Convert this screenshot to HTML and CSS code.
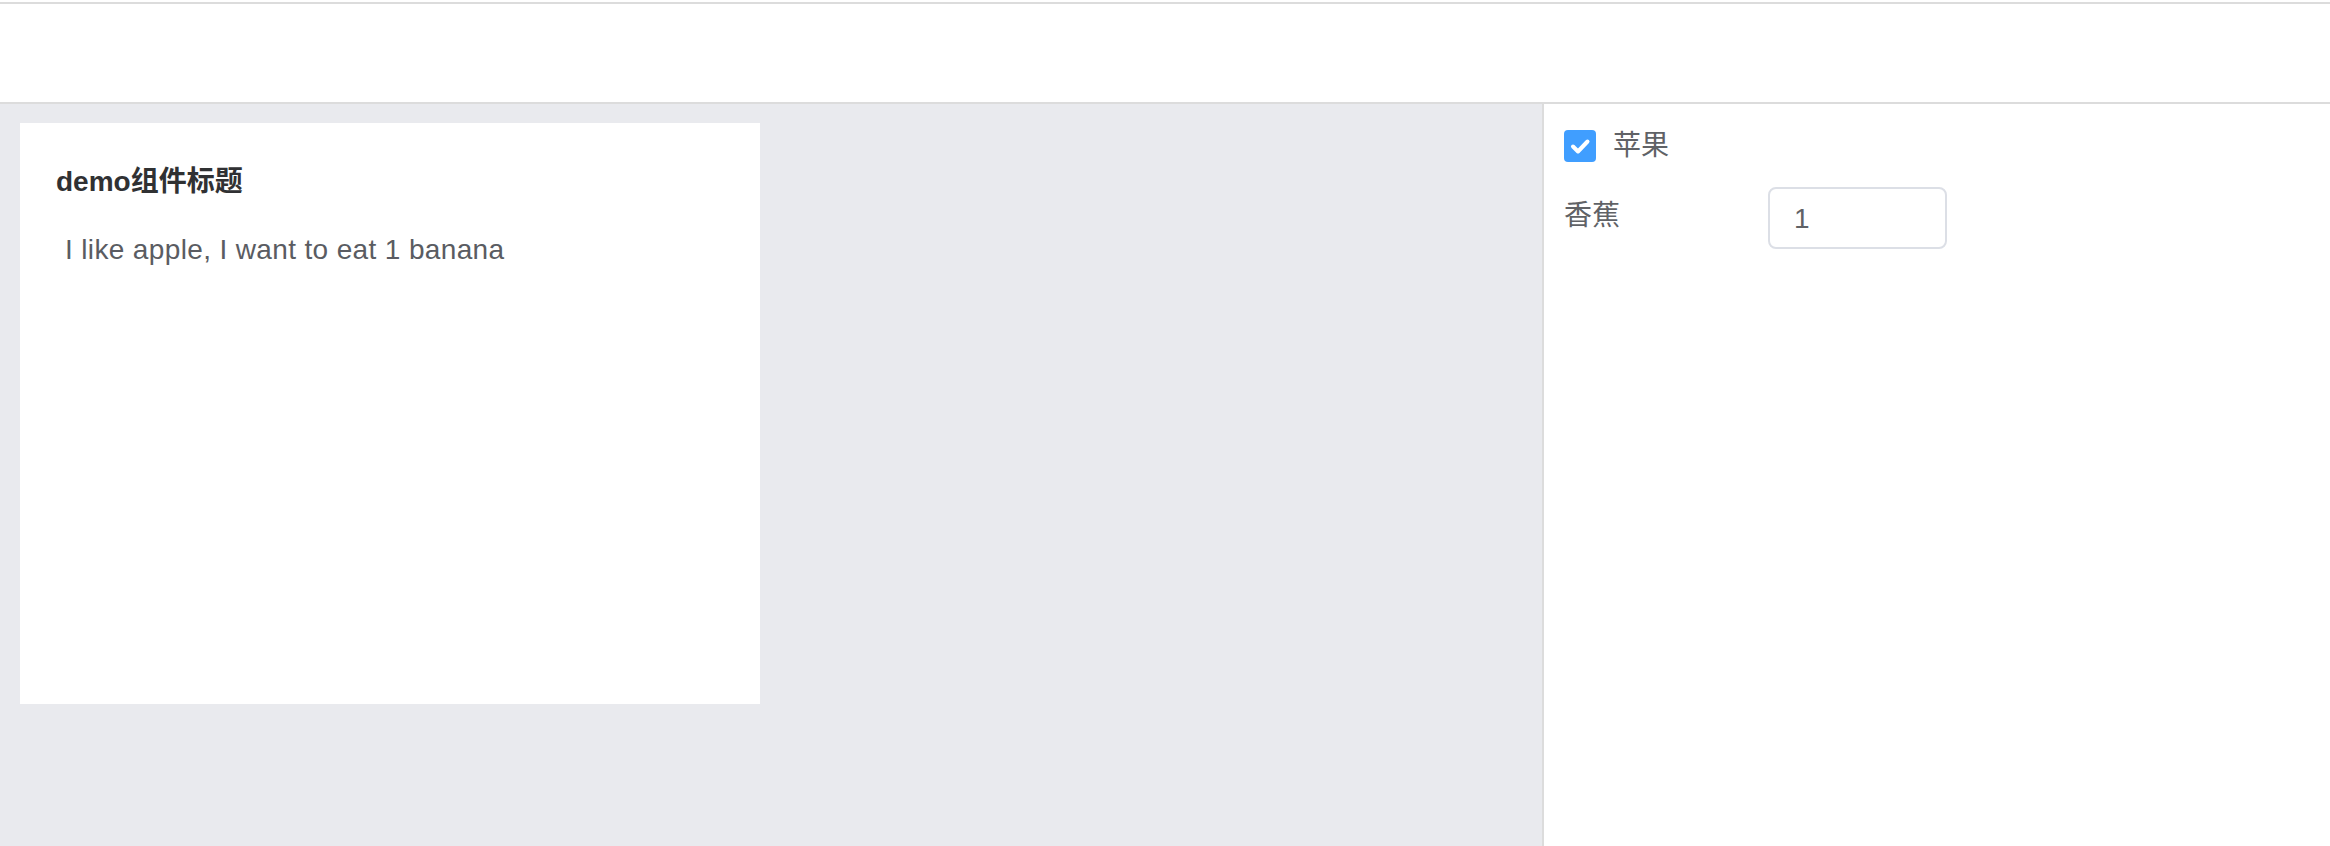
FILE: index.html
```html
<!DOCTYPE html>
<html lang="zh-CN">
<head>
<meta charset="utf-8">
<title>demo</title>
<link rel="stylesheet" href="styles.css">
</head>
<body>
<div class="page">
  <header class="topbar"></header>
  <main class="workspace">
    <section class="canvas">
      <div class="card">
        <h3 class="card-title">demo组件标题</h3>
        <p class="card-text">I like apple, I want to eat 1 banana</p>
      </div>
    </section>
    <aside class="panel">
      <label class="check-row">
        <span class="checkbox">
          <svg viewBox="0 0 32 32" width="32" height="32"><path d="M9 16.5 L14 21.5 L23.5 11.5" fill="none" stroke="#fff" stroke-width="4" stroke-linecap="round" stroke-linejoin="round"/></svg>
        </span>
        <span class="check-label">苹果</span>
      </label>
      <div class="form-row">
        <span class="form-label">香蕉</span>
        <div class="input">1</div>
      </div>
    </aside>
  </main>
</div>
</body>
</html>
```

FILE: styles.css
```css
html, body {
  margin: 0;
  padding: 0;
  background: #ffffff;
  font-family: "Liberation Sans", "Noto Sans CJK SC", sans-serif;
}

.page {
  display: flex;
  flex-direction: column;
  height: 846px;
  padding-top: 2px;
  box-sizing: border-box;
}

.topbar {
  height: 98px;
  background: #ffffff;
  border-top: 2px solid #dcdcdc;
  border-bottom: 2px solid #dcdcdc;
  flex: none;
}

.workspace {
  flex: 1;
  display: flex;
  min-height: 0;
}

.canvas {
  width: 1542px;
  flex: none;
  background: #e9eaee;
  padding: 19px 0 0 20px;
  box-sizing: border-box;
}

.card {
  width: 740px;
  height: 581px;
  background: #ffffff;
  padding: 39px 0 0 36px;
  box-sizing: border-box;
}

.card-title {
  margin: 0;
  font-size: 28px;
  line-height: 40px;
  font-weight: bold;
  color: #303133;
}

.card-text {
  margin: 28px 0 0 9px;
  font-size: 28px;
  line-height: 40px;
  letter-spacing: 0.36px;
  color: #5a5c62;
}

.panel {
  flex: 1;
  background: #ffffff;
  border-left: 2px solid #dcdcdc;
  padding: 26px 0 0 20px;
}

.check-row {
  display: flex;
  align-items: center;
  height: 32px;
}

.checkbox {
  width: 32px;
  height: 32px;
  border-radius: 4px;
  background: #409eff;
  display: block;
  flex: none;
}

.checkbox svg {
  display: block;
}

.check-label {
  margin-left: 17px;
  font-size: 28px;
  line-height: 32px;
  color: #606266;
}

.form-row {
  display: flex;
  margin-top: 25px;
}

.form-label {
  width: 204px;
  flex: none;
  font-size: 28px;
  line-height: 58px;
  color: #606266;
}

.input {
  width: 179px;
  height: 62px;
  border: 2px solid #dcdfe6;
  border-radius: 8px;
  box-sizing: border-box;
  padding-left: 24px;
  font-size: 28px;
  line-height: 60px;
  color: #606266;
}
```
